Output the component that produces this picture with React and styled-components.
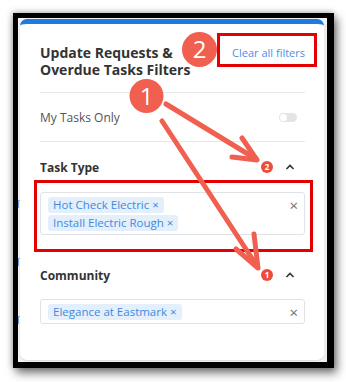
import React from 'react';
import styled, { createGlobalStyle } from 'styled-components';

const Global = createGlobalStyle`
	html, body {
		margin: 0;
		padding: 0;
		background: #ffffff;
	}
	body {
		font-family: "Open Sans", "Noto Sans", sans-serif;
		width: 346px;
		height: 382px;
		overflow: hidden;
	}
`

const Page = styled.div`
	position: relative;
	width: 346px;
	height: 382px;
	padding: 13px 0 0 13px;
	box-sizing: border-box;
`
const Frame = styled.div`
	width: 321px;
	height: 355px;
	box-sizing: border-box;
	border-style: solid;
	border-color: #000;
	border-width: 5px 7px 6px 5px;
	box-shadow: 3px 5px 9px rgba(0, 0, 0, 0.55), -1px -1px 6px rgba(0, 0, 0, 0.25);
	background: #f4f5f7;
	display: flex;
	overflow: hidden;
`
const Sliver = styled.div`
	width: 2px;
	display: flex;
	flex-direction: column;
	padding-top: 182px;
	gap: 50px;
`
const SliverMark = styled.div`
	width: 2px;
	height: 8px;
	border-left: 1px solid #6ea4e8;
	border-top: 1px solid #8fb8ee;
	box-sizing: border-box;
`
const Panel = styled.div`
	width: 304px;
	margin-top: 1px;
	height: 341px;
	box-sizing: border-box;
	background: #fff;
	border-top: 5px solid #1f7ae0;
	border-radius: 7px;
	box-shadow: 0 1px 2px rgba(0, 0, 0, 0.12);
	padding: 0 19px 0 20px;
	display: flex;
	flex-direction: column;
`
const Gutter = styled.div`
	flex: 1;
	background: #ececec;
	margin-top: 6px;
`
const Header = styled.div`
	display: flex;
	justify-content: space-between;
	align-items: flex-start;
	padding: 20px 0 14px;
	border-bottom: 1px solid #e6e8eb;
`
const Title = styled.h2`
	margin: 0;
	font-size: 14px;
	line-height: 17px;
	font-weight: 700;
	color: #333;
`
const ClearLink = styled.a`
	font-size: 11px;
	color: #4a90e6;
	margin-top: 1px;
	white-space: nowrap;
`
const ToggleRow = styled.div`
	display: flex;
	justify-content: space-between;
	align-items: center;
	height: 48px;
	border-bottom: 1px solid #e6e8eb;
`
const Label = styled.span`
	font-size: 12px;
	color: #555;
`
const Toggle = styled.div`
	width: 18px;
	height: 9px;
	border-radius: 5px;
	background: #e3e4e6;
	margin-right: 8px;
	position: relative;
	&::after {
		content: '';
		position: absolute;
		left: 1px;
		top: 1px;
		width: 7px;
		height: 7px;
		border-radius: 50%;
		background: #fff;
	}
`
const SectionHead = styled.div`
	display: flex;
	align-items: center;
	height: 16px;
	margin-top: ${p => p.$top}px;
`
const SectionTitle = styled.span`
	flex: 1;
	font-size: 12px;
	font-weight: 700;
	color: #333;
`
const Badge = styled.span`
	width: 12px;
	height: 12px;
	border-radius: 50%;
	background: #ef4b3c;
	color: #fff;
	font-size: 8px;
	font-weight: 700;
	display: flex;
	align-items: center;
	justify-content: center;
	line-height: 1;
`
const Chevron = styled.svg`
	width: 10px;
	height: 10px;
	margin: 0 10px 0 12px;
`
const Select = styled.div`
	margin-top: ${p => p.$top}px;
	border: 1px solid #dfe2e6;
	border-radius: 3px;
	padding: 4px 6px 3px 7px;
	display: flex;
	align-items: flex-start;
`
const Chips = styled.div`
	flex: 1;
	display: flex;
	flex-direction: column;
	align-items: flex-start;
	gap: 2px;
`
const Chip = styled.span`
	background: #e4effc;
	color: #3f8ae0;
	font-size: 11.5px;
	line-height: 16px;
	padding: 0 5px;
	border-radius: 3px;
	white-space: nowrap;
`
const ClearX = styled.span`
	font-size: 15px;
	line-height: 14px;
	color: #6f6f6f;
	margin-top: 1px;
`
const Overlay = styled.svg`
	position: absolute;
	left: 0;
	top: 0;
	width: 346px;
	height: 382px;
	pointer-events: none;
`

const ChevronUp = () => (
	<Chevron viewBox="0 0 10 10">
		<path d="M1.5 7 L5 3.5 L8.5 7" fill="none" stroke="#333" strokeWidth="1.6" />
	</Chevron>
);

const Section = ({ title, count, headTop, selTop, items }) => (
	<>
		<SectionHead $top={headTop}>
			<SectionTitle>{title}</SectionTitle>
			<Badge>{count}</Badge>
			<ChevronUp />
		</SectionHead>
		<Select $top={selTop}>
			<Chips>
				{items.map(i => <Chip key={i}>{i} ×</Chip>)}
			</Chips>
			<ClearX>×</ClearX>
		</Select>
	</>
);

const ARROW = '#f05f4f';

const App = () => (
	<>
		<Global />
		<Page>
			<Frame>
				<Sliver>
					<SliverMark />
					<SliverMark />
					<SliverMark />
				</Sliver>
				<Panel>
					<Header>
						<Title>Update Requests &amp;<br />Overdue Tasks Filters</Title>
						<ClearLink>Clear all filters</ClearLink>
					</Header>
					<ToggleRow>
						<Label>My Tasks Only</Label>
						<Toggle />
					</ToggleRow>
					<Section
						title="Task Type"
						count="2"
						headTop={17}
						selTop={17}
						items={['Hot Check Electric', 'Install Electric Rough']}
					/>
					<Section
						title="Community"
						count="1"
						headTop={32}
						selTop={16}
						items={['Elegance at Eastmark']}
					/>
				</Panel>
				<Gutter />
			</Frame>
			<Overlay viewBox="0 0 346 382">
				<rect x="218.5" y="34.5" width="97" height="31" fill="none" stroke="#e30000" strokeWidth="3" />
				<rect x="35.5" y="181.5" width="276" height="69" fill="none" stroke="#e30000" strokeWidth="3" />
				<g stroke={ARROW} strokeWidth="5" strokeLinecap="round" fill="none">
					<line x1="166" y1="104" x2="256" y2="159" />
					<polyline points="242,138 257,160 232,157" strokeLinejoin="round" />
					<line x1="162" y1="121" x2="257" y2="266" />
					<polyline points="254,234 258,268 236,249" strokeLinejoin="round" />
				</g>
				<circle cx="199.5" cy="49.5" r="17.5" fill={ARROW} />
				<text x="199.5" y="58" textAnchor="middle" fill="#fff" fontSize="24" fontFamily="Open Sans, sans-serif">2</text>
				<circle cx="146.5" cy="96" r="17" fill={ARROW} />
				<text x="146.5" y="104.5" textAnchor="middle" fill="#fff" fontSize="24" fontFamily="Open Sans, sans-serif">1</text>
			</Overlay>
		</Page>
	</>
);

export default App;
